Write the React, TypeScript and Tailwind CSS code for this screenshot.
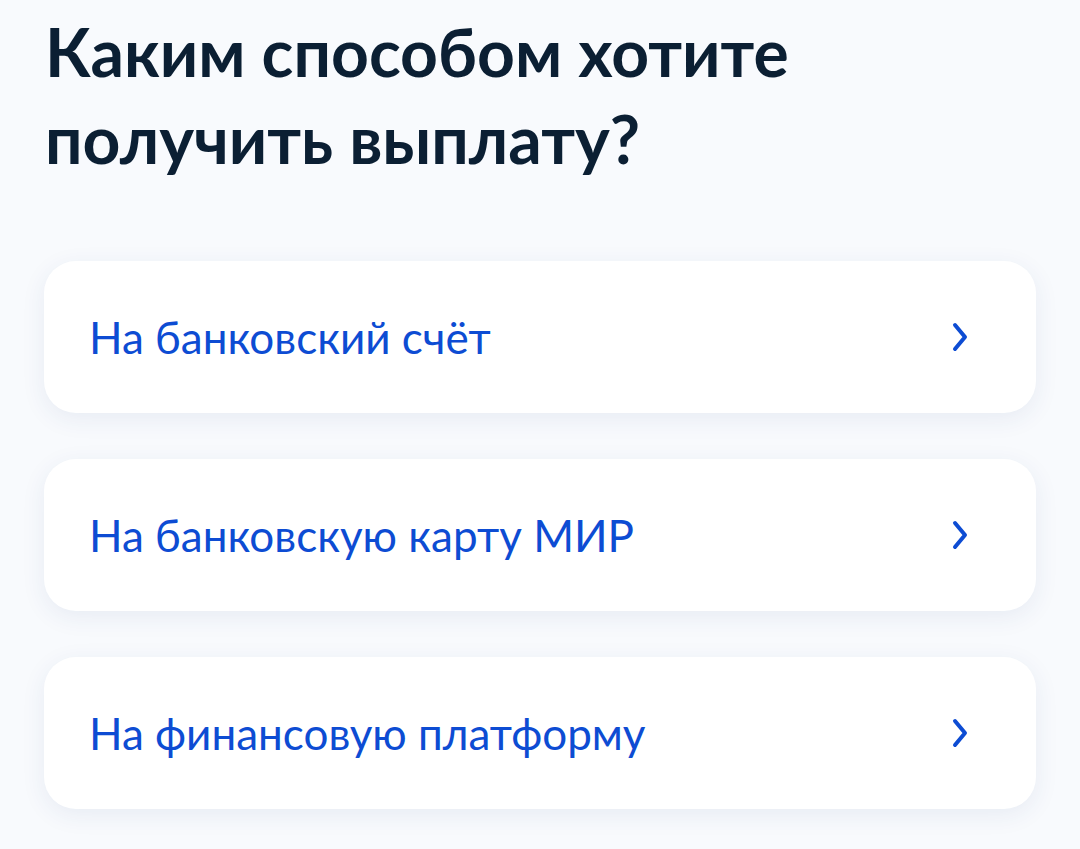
import React from "react";

const items = ["На банковский счёт", "На банковскую карту МИР", "На финансовую платформу"];

function Chevron() {
  return (
    <svg width="20" height="30" viewBox="0 0 20 30" fill="none">
      <path d="M5 3 L15 15 L5 27" stroke="#0d4cd3" strokeWidth="4" strokeLinecap="round" strokeLinejoin="round" />
    </svg>
  );
}

export default function App() {
  return (
    <div className="min-h-[849px] w-[1080px] bg-[#f8fafd] pt-[8px] px-[44px]" style={{ fontFamily: "Lato, 'Noto Sans', sans-serif" }}>
      <h1 className="text-[66px] leading-[87px] font-bold text-[#0b1f33] pl-[1px]">
        Каким способом хотите
        <br />
        получить выплату?
      </h1>
      <div className="mt-[79px] flex flex-col gap-[46px] w-[992px]">
        {items.map((t) => (
          <div key={t} className="h-[152px] rounded-[32px] bg-white shadow-[0_6px_24px_rgba(34,58,128,0.08)] flex items-center justify-between pl-[45px] pr-[66px]">
            <span className="text-[44px] text-[#0d4cd3]">{t}</span>
            <Chevron />
          </div>
        ))}
      </div>
    </div>
  );
}
